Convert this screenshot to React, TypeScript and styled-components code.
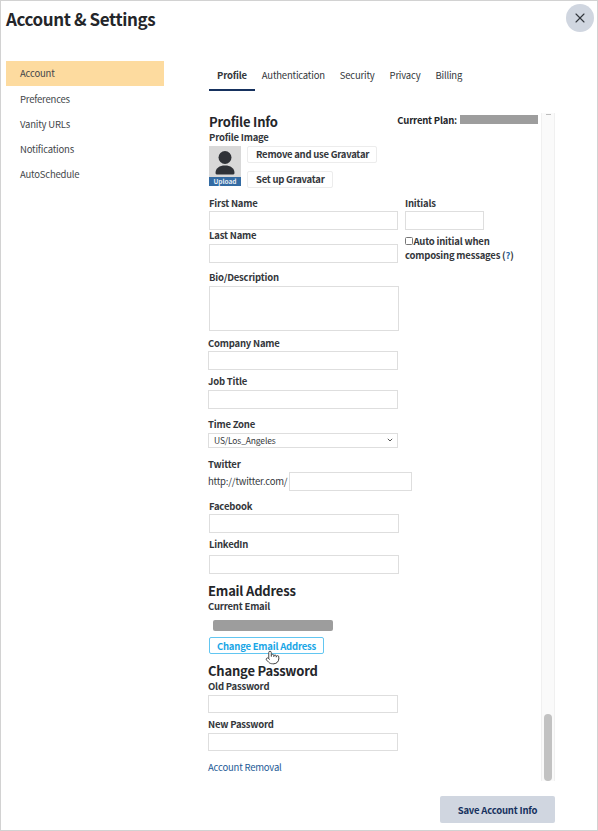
import React from "react";
import styled, { createGlobalStyle } from "styled-components";
import { Pointer, X } from "lucide-react";

const GlobalStyle = createGlobalStyle`
  html, body {
    margin: 0;
    padding: 0;
    background: #fff;
  }
  * {
    box-sizing: border-box;
  }
`;

const sidebarItems = ["Account", "Preferences", "Vanity URLs", "Notifications", "AutoSchedule"];
const tabs = ["Profile", "Authentication", "Security", "Privacy", "Billing"];

const App = () => {
  return (
    <Frame>
      <GlobalStyle />
      <Header>
        <Title>Account &amp; Settings</Title>
        <CloseButton type="button" aria-label="Close">
          <X size={16} strokeWidth={1.7} />
        </CloseButton>
      </Header>
      <Body>
        <Sidebar>
          {sidebarItems.map((item, i) => (
            <SideItem key={item} $active={i === 0}>
              {item}
            </SideItem>
          ))}
        </Sidebar>
        <Main>
          <Tabs>
            {tabs.map((tab, i) => (
              <Tab key={tab} $active={i === 0}>
                {tab}
              </Tab>
            ))}
          </Tabs>
          <Scroller>
            <Form>
              <TopRow>
                <Heading>Profile Info</Heading>
                <PlanLine>
                  <PlanLabel>Current Plan:</PlanLabel>
                  <PlanMask />
                </PlanLine>
              </TopRow>
              <Label>Profile Image</Label>
              <ImageRow>
                <Avatar>
                  <svg width="32" height="31" viewBox="0 0 32 31">
                    <circle cx="16" cy="11.5" r="6.5" fill="#2f3237" />
                    <path d="M6.500 27c0-5 4-7.500 9.500-7.500s9.500 2.500 9.500 7.500c0 1-1 1.500-2 1.500H8.500c-1 0-2-.5-2-1.500z" fill="#2f3237" />
                  </svg>
                  <UploadBar>Upload</UploadBar>
                </Avatar>
                <ImageButtons>
                  <PlainButton type="button">Remove and use Gravatar</PlainButton>
                  <PlainButton type="button">Set up Gravatar</PlainButton>
                </ImageButtons>
              </ImageRow>
              <NameRow>
                <NameColumn>
                  <Label>First Name</Label>
                  <Input $width={189} $gap={1} />
                  <Label $top={-1}>Last Name</Label>
                  <Input $width={189} />
                </NameColumn>
                <InitialsColumn>
                  <Label>Initials</Label>
                  <Input $width={79} $gap={1} />
                  <CheckLine>
                    <Check />
                    Auto initial when composing messages (<HelpMark>?</HelpMark>)
                  </CheckLine>
                </InitialsColumn>
              </NameRow>
              <Label $top={8.5}>Bio/Description</Label>
              <TextBox />
              <Label $top={5.5} $shift={-1}>Company Name</Label>
              <Input $width={190} $shift={-1} $gap={1} />
              <Label $top={5.5} $shift={-1}>Job Title</Label>
              <Input $width={190} $shift={-1} />
              <Label $top={8.5} $shift={-1}>Time Zone</Label>
              <SelectBox>
                US/Los_Angeles
                <svg width="6" height="4" viewBox="0 0 6 4">
                  <path d="M.8.8 3 3l2.200-2.200" fill="none" stroke="#555" strokeWidth="1" />
                </svg>
              </SelectBox>
              <Label $top={10.5} $shift={-1}>Twitter</Label>
              <TwitterRow>
                <TwitterPrefix>http://twitter.com/</TwitterPrefix>
                <Input $width={123} $gap={0} />
              </TwitterRow>
              <Label $top={9.5}>Facebook</Label>
              <Input $width={190} $gap={1} />
              <Label $top={4.5}>LinkedIn</Label>
              <Input $width={190} $gap={4.5} />
              <Heading $top={8} $shift={-1}>Email Address</Heading>
              <Label $shift={-1}>Current Email</Label>
              <EmailMask />
              <EmailButton type="button">
                Change Email Address
                <HandCursor>
                  <Pointer size={15} fill="#fff" strokeWidth={1.6} />
                </HandCursor>
              </EmailButton>
              <Heading $top={8} $shift={-1}>Change Password</Heading>
              <Label $shift={-1}>Old Password</Label>
              <Input $width={190} $shift={-1} $height={18} />
              <Label $top={4.5} $shift={-1}>New Password</Label>
              <Input $width={190} $shift={-1} $height={18} />
              <RemovalLink href="#">Account Removal</RemovalLink>
            </Form>
            <ScrollTrack>
              <ScrollArrow />
              <ScrollThumb />
            </ScrollTrack>
          </Scroller>
          <Footer>
            <SaveButton type="button">Save Account Info</SaveButton>
          </Footer>
        </Main>
      </Body>
    </Frame>
  );
};

const Frame = styled.div`
  width: 598px;
  height: 831px;
  overflow: hidden;
  border: 1px solid #d2d2d2;
  background: #fff;
  color: #2e3033;
  font-family: "Noto Sans CJK JP", "Source Sans Pro", "Open Sans", sans-serif;
  font-size: 9.500px;
  letter-spacing: -0.2px;
`;

const Header = styled.div`
  height: 60px;
  padding: 3px 3px 0 5px;
  display: flex;
  justify-content: space-between;
  align-items: flex-start;
`;

const Title = styled.h1`
  margin: -1px 0 0;
  font-size: 17px;
  line-height: 32px;
  font-weight: 700;
  letter-spacing: -0.4px;
  color: #24262a;
`;

const CloseButton = styled.button`
  width: 28px;
  height: 28px;
  padding: 0;
  border: none;
  border-radius: 50%;
  background: #d0d6e0;
  color: #33373d;
  display: flex;
  align-items: center;
  justify-content: center;
`;

const Body = styled.div`
  display: flex;
  align-items: flex-start;
`;

const Sidebar = styled.nav`
  width: 158px;
  margin-left: 5px;
  flex: none;
`;

const SideItem = styled.div<{ $active?: boolean }>`
  height: 25.200px;
  padding: 0 0 0.500px 14px;
  display: flex;
  align-items: center;
  color: #44474b;
  background: ${(p) => (p.$active ? "#fddb9f" : "transparent")};
`;

const Main = styled.div`
  width: 346px;
  margin-left: 45px;
  flex: none;
`;

const Tabs = styled.div`
  height: 30px;
  display: flex;
  gap: 15px;
  margin-bottom: 22px;
`;

const Tab = styled.div<{ $active?: boolean }>`
  height: 30px;
  padding: ${(p) => (p.$active ? "5.500px 8px 0" : "5.500px 0 0")};
  margin-right: ${(p) => (p.$active ? "-8px" : "0")};
  line-height: 16px;
  font-weight: ${(p) => (p.$active ? 700 : 400)};
  color: #34373b;
  border-bottom: ${(p) => (p.$active ? "2px solid #16315e" : "none")};
`;

const Scroller = styled.div`
  height: 668px;
  display: flex;
  justify-content: space-between;
  align-items: stretch;
`;

const Form = styled.div`
  width: 329px;
`;

const TopRow = styled.div`
  display: flex;
  justify-content: space-between;
  align-items: flex-start;
`;

const Heading = styled.h2<{ $top?: number; $shift?: number }>`
  margin: ${(p) => p.$top ?? 0}px 0 0 ${(p) => p.$shift ?? 0}px;
  font-size: 13px;
  line-height: 18px;
  font-weight: 700;
  color: #24262a;
`;

const PlanLine = styled.div`
  display: flex;
  align-items: center;
  gap: 3px;
  height: 11px;
  margin-top: 1px;
`;

const PlanLabel = styled.span`
  font-weight: 700;
  color: #24262a;
`;

const PlanMask = styled.span`
  width: 78px;
  height: 9px;
  background: #9d9d9d;
`;

const Label = styled.div<{ $top?: number; $shift?: number }>`
  margin: ${(p) => p.$top ?? 0}px 0 0 ${(p) => p.$shift ?? 0}px;
  line-height: 13px;
  font-weight: 700;
  color: #34373b;
`;

const ImageRow = styled.div`
  display: flex;
  gap: 6px;
  margin: 2px 0 9px;
`;

const Avatar = styled.div`
  width: 32px;
  height: 40px;
  background: #d8d8d8;
  display: flex;
  flex-direction: column;
  justify-content: space-between;
`;

const UploadBar = styled.div`
  height: 9px;
  background: #336ba3;
  color: #e8eef5;
  font-size: 6.500px;
  line-height: 9px;
  font-weight: 700;
  letter-spacing: 0;
  text-align: center;
`;

const ImageButtons = styled.div`
  display: flex;
  flex-direction: column;
  align-items: flex-start;
  gap: 8.500px;
`;

const PlainButton = styled.button`
  height: 16.500px;
  padding: 0 7px 0 8px;
  border: 1px solid #ececec;
  border-radius: 2px;
  background: #fff;
  font-family: inherit;
  font-size: inherit;
  letter-spacing: -0.25px;
  line-height: 14px;
  font-weight: 700;
  color: #34373b;
`;

const NameRow = styled.div`
  display: flex;
  gap: 7px;
`;

const NameColumn = styled.div`
  width: 189px;
`;

const InitialsColumn = styled.div`
  width: 118px;
`;

const Input = styled.div<{ $width: number; $shift?: number; $gap?: number; $height?: number }>`
  width: ${(p) => p.$width}px;
  height: ${(p) => p.$height ?? 19}px;
  margin: ${(p) => p.$gap ?? 2}px 0 0 ${(p) => p.$shift ?? 0}px;
  border: 1px solid #dedede;
  background: #fff;
`;

const TextBox = styled.div`
  width: 190px;
  height: 45px;
  margin-top: 2px;
  border: 1px solid #dedede;
`;

const SelectBox = styled.div`
  width: 190px;
  height: 15px;
  margin: 2px 0 0 -1px;
  padding: 0 4px 0 5px;
  display: flex;
  align-items: center;
  justify-content: space-between;
  border: 1px solid #dedede;
  font-size: 8.500px;
  letter-spacing: -0.15px;
  color: #34373b;
`;

const TwitterRow = styled.div`
  display: flex;
  align-items: center;
  gap: 2px;
  margin: 0.500px 0 0 -1px;
`;

const TwitterPrefix = styled.span`
  color: #34373b;
`;

const CheckLine = styled.div`
  margin-top: 4px;
  line-height: 14px;
  font-weight: 700;
  color: #34373b;
`;

const Check = styled.span`
  display: inline-block;
  width: 7.500px;
  height: 7.500px;
  margin-right: 1px;
  border: 1px solid #777;
  border-radius: 1.500px;
`;

const HelpMark = styled.span`
  color: #2a6aa5;
`;

const EmailMask = styled.div`
  width: 120px;
  height: 11px;
  margin: 7px 0 0 4px;
  border-radius: 2px;
  background: #9d9d9d;
`;

const EmailButton = styled.button`
  position: relative;
  display: block;
  width: 115px;
  height: 17px;
  margin-top: 6px;
  padding: 0;
  border: 1px solid #62c6f1;
  border-radius: 2px;
  background: #fff;
  font-family: inherit;
  font-size: inherit;
  letter-spacing: inherit;
  line-height: 14px;
  font-weight: 700;
  color: #1aa6e6;
`;

const HandCursor = styled.span`
  position: absolute;
  left: 55px;
  top: 12px;
  color: #4a4a4a;
  line-height: 0;
`;

const RemovalLink = styled.a`
  display: block;
  margin: 9px 0 0 -1px;
  line-height: 14px;
  color: #1d5a96;
  text-decoration: none;
`;

const ScrollTrack = styled.div`
  width: 14px;
  padding: 0 2px;
  display: flex;
  flex-direction: column;
  justify-content: space-between;
  align-items: center;
  background: #fafafa;
  border-left: 1px solid #f0f0f0;
  border-right: 1px solid #f0f0f0;
`;

const ScrollArrow = styled.div`
  width: 5px;
  height: 1px;
  margin-top: 1px;
  background: #bdbdbd;
`;

const ScrollThumb = styled.div`
  width: 8px;
  height: 67px;
  border-radius: 4px;
  background: #c2c2c2;
`;

const Footer = styled.div`
  display: flex;
  justify-content: flex-end;
  margin-top: 15px;
`;

const SaveButton = styled.button`
  width: 115px;
  height: 27px;
  padding: 0;
  border: none;
  border-radius: 2px;
  background: #d0d6e0;
  font-family: inherit;
  font-size: inherit;
  letter-spacing: inherit;
  font-weight: 700;
  color: #16315e;
`;

export default App;
